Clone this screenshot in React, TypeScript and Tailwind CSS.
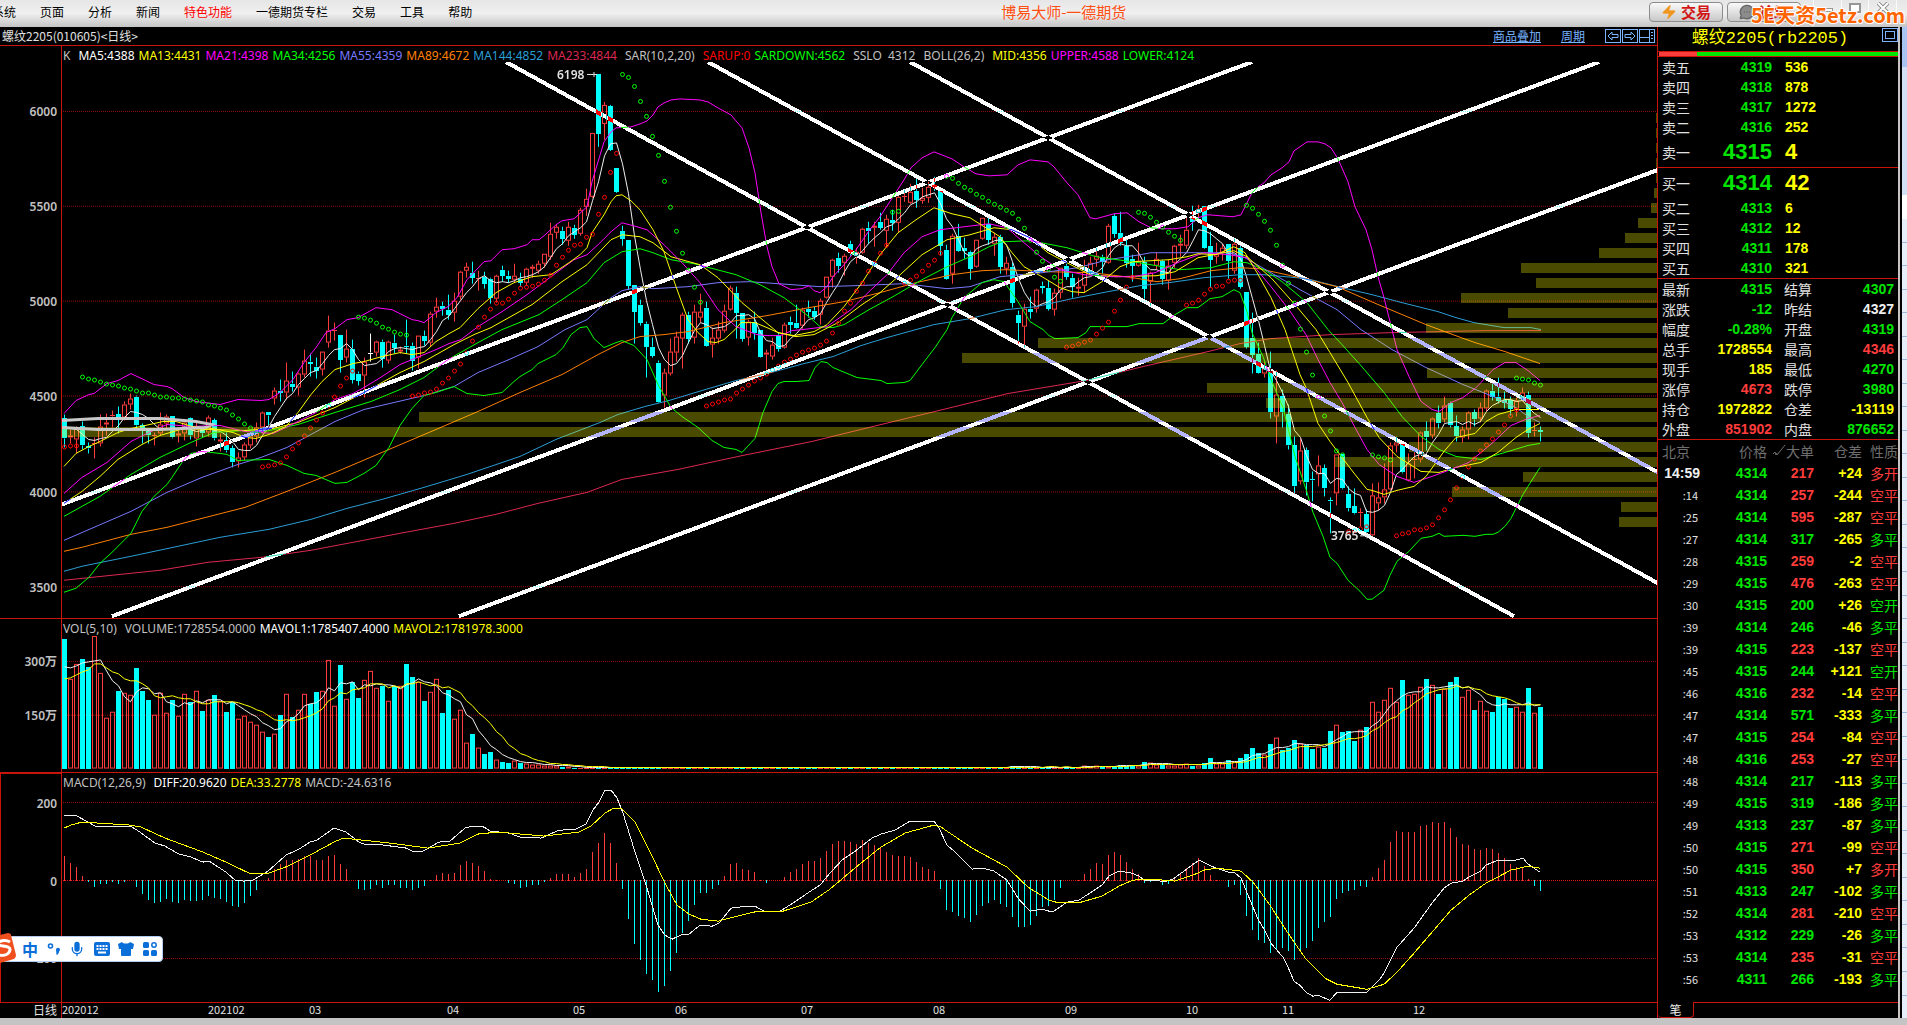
import React from "react";
import { Zap, MessageCircleMore, Mic } from "lucide-react";

const UP = "#ff3c3c";
const DOWN = "#00ffff";
const X0 = 64.5;
const STEP = 6;
const xAt = (i: number) => X0 + STEP * i;

type Candle = { kind: string; top: number; bottom: number; high: number; low: number };

/* kind (u = rise, d = fall, w = flat), body top, body bottom, high, low */
const CANDLE_TEXT = `d 419 439 415 447|u 436 438 430 443|u 429 440 427 453|d 427 446 422 449|d 447 449 443 453|u 444 445 438 458|u 427 444 415 446|u 423 425 414 435|u 416 417 411 427|d 415 418 407 433
u 405 418 402 420|u 399 405 394 409|d 397 426 396 429|d 426 429 424 443|d 432 436 430 443|u 436 437 433 445|u 425 434 413 435|u 417 424 415 430|d 417 438 417 438|u 434 436 431 442
u 423 434 420 440|d 419 436 418 439|u 429 439 422 446|d 430 434 427 437|u 418 433 416 436|d 421 439 419 440|u 440 442 434 451|d 441 451 433 452|d 449 463 446 467|u 458 462 453 467
u 445 458 443 460|u 437 446 435 448|u 428 437 423 442|u 413 428 412 433|d 413 416 413 425|u 391 399 388 404|d 391 393 380 401|u 381 393 363 399|d 384 387 372 391|u 374 388 373 395
u 361 375 350 377|d 362 364 354 376|d 367 371 358 378|u 352 370 352 375|u 331 343 316 347|u 330 331 323 340|d 335 360 335 372|u 349 358 330 362|d 349 380 340 383|d 374 381 372 385
u 362 376 358 397|w 353 354 334 361|u 342 353 341 356|d 342 359 340 367|u 342 361 341 363|d 343 348 335 353|u 350 352 347 353|d 346 347 320 353|d 346 361 343 370|u 336 358 336 368
d 336 341 331 345|u 314 343 312 346|u 307 312 298 317|d 306 309 302 315|d 310 315 295 319|u 301 313 293 321|u 272 297 271 299|u 267 271 263 277|d 273 278 262 283|u 278 279 271 290
d 277 284 272 288|d 279 298 278 303|u 276 299 275 302|d 270 276 266 281|d 276 279 271 282|u 276 280 264 282|d 279 283 273 286|u 269 283 268 285|u 267 269 265 277|u 264 271 261 273
u 254 264 254 267|u 234 257 223 259|u 227 233 225 238|d 231 239 227 244|u 227 241 222 245|d 228 235 225 238|u 210 234 208 235|u 199 207 189 215|u 133 197 133 197|d 74 134 74 146
u 105 124 102 139|d 106 150 105 150|d 168 192 168 192|d 231 239 226 245|d 240 286 240 289|d 285 312 285 343|d 305 323 300 325|d 324 347 322 377|d 347 356 338 357|d 363 402 361 402
u 373 396 369 407|u 352 374 339 375|u 337 353 332 361|u 315 339 313 368|d 315 339 312 343|u 312 338 305 343|u 312 318 294 322|d 308 346 302 346|u 338 345 328 357|u 330 339 322 343
u 311 331 305 332|u 288 310 286 310|d 293 313 287 338|d 313 339 313 341|u 322 338 320 345|d 322 333 312 339|d 330 357 330 357|u 353 355 350 369|u 345 357 338 359|d 335 349 333 351
u 325 348 323 348|d 322 325 317 333|d 323 328 305 328|u 310 326 308 328|d 309 312 301 317|d 311 317 307 319|u 301 315 299 324|u 277 298 277 298|u 260 277 259 287|d 258 266 253 272
u 256 263 254 275|d 244 252 241 255|u 252 256 248 263|u 229 253 228 253|d 228 231 222 243|u 226 228 222 246|d 222 228 213 229|u 219 231 215 247|d 220 223 210 230|u 197 223 196 232
u 196 197 190 201|u 192 203 184 203|d 191 200 179 207|u 198 201 188 203|u 187 198 182 202|d 185 187 177 190|d 191 246 191 255|d 250 279 245 279|u 236 274 234 283|d 236 251 224 251
d 248 251 238 258|d 252 269 251 279|u 240 267 240 267|u 218 239 218 239|d 224 240 218 244|u 237 244 233 255|d 237 267 235 273|u 263 269 257 274|d 267 303 263 307|d 315 323 311 343
u 309 327 304 347|d 309 312 297 318|u 290 309 289 312|d 286 288 282 293|d 288 309 281 310|u 293 310 289 315|u 268 293 268 298|d 266 277 264 279|d 278 287 274 297|u 287 289 278 295
u 272 286 260 292|u 263 272 257 274|u 256 260 248 266|d 257 262 255 273|u 226 263 224 263|d 216 234 214 237|d 233 243 212 245|d 246 263 240 267|d 259 266 255 281|u 261 266 243 266
d 262 289 257 298|u 273 282 272 305|u 259 266 253 269|d 261 279 260 284|u 266 281 260 289|u 246 263 245 267|u 244 246 235 256|u 230 246 218 248|d 218 222 206 230|u 209 213 205 218
d 206 248 206 248|d 246 260 232 287|u 254 257 243 263|u 248 253 244 260|d 244 261 244 278|u 244 271 239 273|d 248 287 246 288|d 292 347 292 348|d 338 355 313 373|d 354 373 343 373
u 369 374 362 377|d 371 413 352 418|u 395 417 371 443|d 396 413 390 427|d 415 446 405 449|d 446 487 437 493|u 451 482 439 484|d 451 483 448 495|d 480 481 472 501|u 466 475 456 486
d 469 489 465 496|d 501 502 498 533|u 455 494 455 505|d 455 489 455 489|d 495 509 487 511|d 507 514 489 514|u 513 514 509 526|d 515 533 510 533|u 496 536 484 536|u 498 504 483 510
u 490 498 464 503|u 446 490 443 490|u 443 446 437 452|d 445 473 445 473|u 464 481 454 481|u 460 461 451 478|u 433 460 432 462|d 432 438 422 450|u 419 436 418 438|d 414 424 406 428
u 406 420 397 422|d 403 426 402 427|d 427 437 416 441|u 430 438 427 442|u 413 430 412 439|d 413 420 410 426|u 408 419 403 422|u 391 409 390 411|d 391 397 384 400|d 397 401 378 403
d 400 403 392 408|d 400 409 397 415|u 401 410 398 416|u 393 398 388 401|d 395 434 392 437|u 431 432 423 436|d 431 433 427 441`;

const CANDLES: Candle[] = CANDLE_TEXT.split(/[|\n]/).map((row) => {
  const [kind, ...n] = row.trim().split(" ");
  const [top, bottom, high, low] = n.map(Number);
  return { kind, top, bottom, high, low };
});

const VOLUMES: number[] = [
  130, 90, 105, 110, 102, 133, 96, 51, 57, 78, 76, 74, 101, 78, 69, 54, 76, 56, 69, 53, 75, 67, 78, 58, 69, 74, 68, 57, 67, 50,
  53, 47, 44, 37, 32, 35, 54, 75, 52, 59, 75, 65, 77, 78, 109, 63, 104, 70, 87, 71, 89, 98, 81, 83, 68, 83, 83, 105, 92, 87,
  68, 77, 90, 56, 79, 50, 59, 26, 35, 21, 15, 17, 9, 7, 6, 8, 6, 5, 4, 4, 3, 3, 3, 2, 2,
  ...Array(71).fill(1),
  2, 1, 3, 3, 1, 1, 1, 1, 2, 1, 1, 2, 1, 1, 3, 2, 3, 2, 2, 3, 4, 3,
  4, 3, 7, 6, 4, 5, 3, 3, 4, 5, 3, 3, 6, 11, 5, 5, 9, 7, 11, 15, 21, 16, 14, 25, 31, 19, 21, 29, 25, 24, 20, 22, 21, 38,
  44, 37, 38, 28, 39, 42, 67, 57, 69, 81, 67, 89, 74, 75, 82, 90, 84, 75, 80, 87, 92, 72, 79, 59, 68, 58, 57, 72, 70, 61,
  62, 57, 81, 56, 62,
];

const HISTOGRAM: number[] = [
  25, 18, 14, 5, -1, -6, -3, -3, -1, -3, -1, 0, -6, -13, -19, -22, -21, -18, -21, -22, -19, -20, -20, -19, -15, -17, -18, -21,
  -25, -26, -22, -15, -9, 0, 3, 12, 17, 21, 21, 22, 25, 25, 21, 21, 25, 26, 17, 12, 0, -8, -9, -8, -4, -7, -4, -4, -7, -7, -9,
  -7, -5, 1, 6, 8, 7, 8, 16, 20, 18, 15, 10, 2, 1, 0, -2, -3, -7, -6, -4, -4, -1, 3, 7, 7, 7, 4, 8, 12, 29, 38, 48, 38, 18,
  -8, -38, -63, -79, -93, -99, -111, -105, -90, -72, -52, -40, -24, -12, -12, -8, -4, 5, 17, 18, 12, 11, 9, 1, -2, 0, 0, 4, 9,
  12, 17, 20, 20, 23, 30, 37, 40, 40, 39, 37, 41, 38, 36, 33, 29, 26, 25, 25, 24, 19, 14, 12, 10, -8, -29, -31, -35, -37, -41,
  -34, -25, -22, -19, -23, -26, -36, -46, -46, -44, -35, -26, -25, -19, -7, 0, 0, 1, 7, 12, 18, 17, 26, 29, 26, 19, 12, 7, -2,
  -1, 0, -4, -3, 2, 7, 13, 18, 23, 15, 6, 1, 0, -6, -4, -14, -35, -49, -59, -62, -72, -69, -67, -70, -79, -69, -67, -60, -47,
  -41, -36, -18, -12, -10, -9, -5, -6, 4, 13, 21, 39, 50, 49, 49, 49, 55, 56, 59, 58, 59, 53, 44, 37, 36, 32, 31, 33, 32, 28,
  23, 17, 14, 14, 2, -5, -10,
];

const average = (values: number[], seed: number[], span: number) => {
  const all = [...seed, ...values];
  return values.map((_, i) => {
    const end = i + seed.length + 1;
    return all.slice(end - span, end).reduce((a, b) => a + b, 0) / span;
  });
};

const toPoints = (ys: number[]) => ys.map((y, i) => `${xAt(i)},${Math.round(y)}`).join(" ");

const MA5 = toPoints(average(CANDLES.map((c) => (c.kind === "d" ? c.bottom : c.top)), [424, 424, 424, 424], 5));
const VOL_SEED = [78, 78, 78, 78, 78, 95, 95, 95, 95];
const MAVOL1 = toPoints(average(VOLUMES, VOL_SEED, 5).map((v) => 769 - v));
const MAVOL2 = toPoints(average(VOLUMES, VOL_SEED, 10).map((v) => 769 - v));

const PRICE_LINES: { color: string; points: string }[] = [
  { color: "#dc2850", points: "64,581 112,576 160,571 208,563 262,558 311,551 353,543 400,534 454,524 496,515 538,504 587,493 622,480 678,470 743,456 812,442 873,427 935,412 1008,394 1086,381 1143,367 1208,352 1240,344 1271,339 1331,335 1392,333 1486,331 1541,331" },
  { color: "#2a9fd6", points: "64,572 82,567 131,557 178,547 220,538 269,530 311,520 347,509 382,500 424,488 467,475 520,457 556,440 600,423 618,415 645,407 669,401 702,391 736,381 771,373 804,364 833,357 861,346 887,338 934,325 970,319 1006,310 1036,307 1072,299 1108,292 1140,286 1169,283 1204,278 1240,275 1264,275 1307,279 1342,288 1372,295 1402,303 1438,312 1456,318 1474,323 1504,328 1531,328 1541,330" },
  { color: "#ff8000", points: "64,552 82,548 131,535 167,528 202,519 245,508 287,492 335,473 389,450 436,430 478,412 520,393 562,375 598,355 622,343 640,337 664,335 688,332 724,323 767,316 809,308 844,302 880,293 916,283 952,275 982,271 1006,270 1047,272 1092,273 1133,278 1157,282 1180,279 1211,271 1240,268 1259,269 1300,278 1337,287 1376,304 1426,325 1461,338 1475,343 1505,352 1540,364" },
  { color: "#7878ff", points: "64,541 94,528 131,512 167,493 202,478 238,465 261,458 287,448 311,435 335,422 364,410 394,403 424,396 454,387 478,373 509,360 538,347 565,330 587,320 611,298 622,291 640,287 653,289 688,287 718,283 749,282 778,284 820,287 856,286 904,284 947,289 970,287 1000,277 1042,273 1078,268 1108,260 1140,255 1151,253 1229,253 1245,258 1271,273 1300,290 1337,310 1361,330 1392,350 1426,368 1463,385 1493,397 1516,408 1528,417 1540,423" },
  { color: "#00ff00", points: "64,517 100,497 131,475 160,458 191,443 214,433 245,431 265,432 298,425 335,413 371,402 400,390 424,378 448,360 478,343 502,330 539,315 562,300 587,283 604,263 622,252 640,249 653,253 671,260 694,264 736,275 760,285 784,298 809,317 820,327 833,328 844,325 869,310 893,297 922,280 947,267 970,257 989,247 1002,242 1031,241 1067,248 1096,257 1139,263 1180,270 1211,268 1234,262 1247,263 1264,270 1282,282 1307,303 1328,330 1342,345 1360,365 1384,393 1402,417 1421,437 1439,450 1456,457 1481,460 1505,453 1528,446 1540,444" },
  { color: "#ffff00", points: "64,504 82,492 100,477 118,460 142,445 160,436 184,429 208,430 245,431 273,429 298,423 335,408 364,393 400,373 424,362 454,345 474,335 491,328 532,305 562,282 587,265 611,240 622,235 640,237 653,243 671,257 700,265 718,278 742,303 760,318 778,333 796,337 814,335 838,323 862,305 880,293 898,277 922,255 947,240 970,235 994,228 1012,230 1030,238 1048,253 1067,263 1090,275 1116,277 1157,276 1175,272 1198,258 1234,251 1247,257 1271,278 1295,305 1316,330 1330,353 1348,383 1367,418 1379,438 1397,457 1421,472 1439,473 1456,468 1481,463 1498,453 1516,438 1528,430 1540,424" },
  { color: "#ff00ff", points: "64,494 82,478 107,463 131,442 149,433 167,425 191,427 220,426 245,432 273,434 286,428 298,422 316,413 335,400 353,394 364,388 382,377 400,365 424,355 436,350 449,344 461,340 478,327 502,312 527,295 551,277 574,260 587,255 598,245 611,232 622,223 637,227 647,230 664,245 682,263 700,283 718,310 736,327 749,332 757,335 767,336 780,336 792,331 802,330 827,327 851,310 869,292 887,275 904,253 922,237 940,230 964,227 989,224 1007,228 1024,243 1042,258 1060,270 1084,275 1112,277 1133,277 1155,273 1180,262 1204,253 1229,255 1247,258 1271,287 1289,310 1306,335 1318,360 1330,383 1342,403 1355,428 1367,450 1379,465 1397,477 1414,483 1432,477 1451,470 1469,463 1493,443 1511,426 1528,419 1540,416" },
  { color: "#ffff00", points: "64,467 76,454 89,447 98,443 118,433 131,429 141,427 163,422 176,422 192,427 212,429 233,433 245,438 256,439 269,435 286,427 298,413 311,395 322,382 335,370 353,364 364,362 382,357 400,353 412,355 424,353 436,342 449,334 460,328 478,309 496,293 514,283 532,277 551,275 569,263 580,255 587,248 592,233 604,215 611,202 616,196 622,195 631,201 640,210 653,230 664,252 676,287 688,320 698,333 708,342 716,343 724,340 735,330 741,323 755,323 767,328 778,333 794,336 814,332 827,325 844,307 862,283 880,255 898,233 916,220 934,208 952,214 970,218 989,230 1000,237 1012,253 1024,267 1042,277 1060,288 1072,292 1084,293 1102,282 1120,267 1133,262 1151,261 1169,260 1187,257 1198,254 1216,255 1234,247 1245,253 1257,273 1271,298 1285,330 1300,375 1306,388 1318,424 1330,442 1342,458 1355,475 1367,490 1372,491 1384,495 1397,491 1414,487 1426,477 1444,452 1456,438 1475,434 1486,422 1498,415 1516,410 1540,410" },
  { color: "#00ff00", points: "64,593 76,589 89,578 100,564 112,553 131,534 142,512 154,497 167,485 172,478 184,460 191,454 202,452 220,454 227,455 238,461 269,460 287,466 304,474 316,476 335,484 347,483 364,474 376,466 389,448 400,426 412,409 424,396 436,393 454,387 467,394 484,396 502,393 514,382 520,377 532,370 538,364 556,355 563,348 571,335 580,328 587,327 594,339 604,348 616,343 622,341 634,346 647,360 658,385 671,408 682,417 698,428 712,441 724,448 736,450 742,453 755,439 763,413 772,392 778,384 784,382 796,382 809,381 815,368 821,362 827,363 833,368 857,378 881,381 887,384 904,383 910,381 922,365 935,348 947,330 952,318 964,298 982,283 994,280 1004,282 1018,302 1030,322 1043,330 1049,336 1055,339 1078,338 1086,333 1090,327 1127,327 1139,324 1163,324 1175,315 1187,308 1198,308 1210,299 1222,297 1234,290 1240,293 1247,312 1252,333 1263,357 1271,380 1283,408 1295,457 1306,490 1313,513 1323,537 1330,558 1337,564 1348,581 1360,592 1367,600 1372,600 1384,591 1390,576 1397,562 1409,552 1421,539 1432,537 1439,534 1444,537 1463,536 1475,537 1486,535 1493,535 1498,533 1505,527 1511,519 1516,509 1523,495 1528,487 1540,468" },
  { color: "#ff00ff", points: "64,414 76,401 89,395 94,394 107,384 118,381 131,374 154,385 167,387 172,389 184,398 196,402 220,405 238,400 261,401 269,400 280,393 293,380 304,363 316,348 326,333 335,329 347,320 358,318 376,308 392,310 412,320 418,321 424,323 436,313 448,307 457,298 467,280 484,262 491,261 502,250 514,249 527,245 532,240 539,240 544,236 556,225 562,221 574,219 587,207 592,182 604,142 611,132 616,128 631,127 640,124 647,121 653,115 658,107 664,103 671,100 680,99 700,100 708,102 718,108 731,115 736,121 742,128 749,148 755,173 761,213 767,247 772,267 779,284 791,290 802,289 809,286 814,291 820,293 827,287 833,277 844,265 856,250 869,231 880,217 893,197 904,180 911,168 922,158 934,152 952,159 964,167 976,174 989,176 1007,175 1018,165 1030,160 1048,162 1054,167 1067,183 1078,195 1090,218 1096,219 1114,214 1127,213 1139,222 1151,228 1162,229 1175,229 1188,227 1198,218 1208,215 1233,217 1241,215 1252,193 1258,187 1264,183 1271,175 1282,168 1289,162 1294,151 1307,142 1318,142 1325,144 1331,148 1338,159 1348,182 1355,207 1366,230 1372,250 1378,277 1384,298 1392,330 1397,350 1409,377 1421,402 1432,410 1439,412 1451,403 1463,398 1475,389 1481,383 1493,370 1505,363 1516,363 1528,371 1540,381" },
];

const DIFF =
  "64,815 77,816 88,822 95,826 130,826 137,830 155,843 165,846 179,854 191,857 203,862 209,861 226,872 235,880 244,881 253,880 268,871 286,855 299,849 310,842 317,840 334,828 346,832 359,842 364,844 376,844 406,848 412,851 423,851 439,842 450,841 465,828 472,826 484,827 490,831 509,833 520,837 541,838 557,831 569,829 576,829 586,824 593,810 599,802 605,790 611,790 617,798 623,813 635,852 647,888 658,925 665,935 672,939 683,934 689,934 700,925 712,926 719,923 731,908 737,907 755,906 764,911 780,911 793,903 809,892 820,885 830,873 842,860 854,852 872,838 881,834 895,830 910,821 934,821 939,828 947,845 954,851 972,869 983,868 994,871 1007,880 1018,898 1030,911 1042,909 1049,911 1054,911 1067,902 1079,900 1102,885 1109,876 1119,871 1132,873 1139,876 1144,880 1157,880 1163,882 1173,879 1199,860 1205,863 1216,868 1228,872 1234,872 1241,878 1253,907 1258,919 1264,929 1271,943 1283,957 1288,967 1294,981 1300,985 1306,992 1313,996 1318,995 1330,1000 1337,992 1355,992 1367,992 1379,980 1384,973 1397,947 1414,928 1432,903 1444,888 1451,883 1463,881 1469,877 1481,871 1486,865 1498,860 1516,860 1523,858 1528,864 1540,872";
const DEA =
  "64,828 71,825 82,822 130,825 141,827 165,838 203,852 226,862 249,873 269,873 288,866 310,855 334,842 343,838 390,843 428,848 460,843 478,834 498,832 544,836 579,832 591,826 605,813 614,808 621,808 635,822 653,858 665,883 677,905 689,914 701,919 718,921 737,916 758,911 783,911 811,902 830,889 856,867 881,847 905,833 934,825 941,827 972,848 1007,867 1028,887 1049,900 1056,902 1081,902 1102,896 1119,886 1133,880 1151,879 1175,881 1193,875 1204,870 1216,868 1241,871 1253,882 1270,905 1288,933 1306,959 1325,978 1337,984 1367,989 1384,984 1397,972 1414,953 1432,932 1451,910 1469,895 1486,883 1511,870 1528,866 1540,868";

/* first candle index, then one mark per candle */
const SAR_DOWN: [number, number[]][] = [
  [3, [377, 379, 380, 382, 384, 385, 386, 388, 389, 391, 393, 393, 395, 397, 397, 398, 398, 399, 400, 401, 402, 405, 406, 408, 410, 415, 419, 424, 428]],
  [49, [317, 318, 320, 323, 327, 329, 332, 334, 335]],
  [93, [74, 77, 86, 101, 116, 136, 155, 181, 207, 231, 253, 270, 287, 302]],
  [138, [212, 211]],
  [147, [176, 178, 183, 187, 190, 194, 197, 201, 204, 207, 210, 213, 219, 228, 240, 252, 261, 269, 277, 281]],
  [179, [212, 213, 217, 222, 227, 232, 236, 240]],
  [197, [205, 208, 214, 221, 230, 245, 265, 283, 303, 329, 352, 375, 397, 416, 431, 451, 455]],
  [218, [455, 457, 458, 460]],
  [242, [378, 379, 380, 383, 385]],
];
const SAR_UP: [number, number[]][] = [
  [0, [447, 446, 446]],
  [33, [467, 466, 465, 463, 457, 449, 443, 436, 428, 420, 413, 406, 397, 386, 378, 371]],
  [58, [396, 395, 393, 392, 389, 383, 378, 371, 364, 353, 341]],
  [69, [327, 317, 309, 303, 303, 299, 293, 288, 287, 286, 284, 280, 275, 265, 257, 250, 245, 244, 237, 234, 214, 197, 172, 153]],
  [107, [406, 404, 402, 400, 399, 393, 389, 385, 381, 378, 374, 370, 366, 362, 359, 355, 352, 350, 348, 345, 341, 333, 323, 311, 303, 291, 283, 271, 263, 253, 245]],
  [140, [283, 280, 276, 271, 265, 260, 253]],
  [167, [347, 346, 344, 342, 340, 334, 328, 322, 311, 300, 287, 277]],
  [187, [305, 303, 300, 294, 289, 286, 286, 281, 280, 280]],
  [214, [532, 531, 529, 527]],
  [222, [536, 534, 533, 530, 530, 528, 525, 518, 510, 500, 488, 477, 467, 459, 451, 445, 439, 432, 425, 416, 410]],
];

/* left edge of each price band, starting at y = 113 with a pitch of 15 */
const PROFILE = [
  1656, 1656, 1656, 1656, 1656, 1654, 1651, 1638, 1625, 1599, 1521, 1536, 1461, 1508, 1426, 1038, 962, 1427, 1207, 1266, 419, 62,
  1409, 1335, 1523, 1452, 1621, 1619,
];

const TRENDS = [
  "506,62 1514,617",
  "708,62 1658,584",
  "910,62 1658,473",
  "62,505 1252,62",
  "112,617 1599,62",
  "459,617 1658,170",
];

type Tag = { text: string; color: string; wide?: boolean };
const GREY = "text-[#c0c0c0]";
const K_TAGS: Tag[] = [
  { text: "K", color: GREY, wide: true },
  { text: "MA5:4388", color: "text-white" },
  { text: "MA13:4431", color: "text-[#ffff00]" },
  { text: "MA21:4398", color: "text-[#ff00ff]" },
  { text: "MA34:4256", color: "text-[#00ff00]" },
  { text: "MA55:4359", color: "text-[#7878ff]" },
  { text: "MA89:4672", color: "text-[#ff8000]" },
  { text: "MA144:4852", color: "text-[#2a9fd6]" },
  { text: "MA233:4844", color: "text-[#dc2850]", wide: true },
  { text: "SAR(10,2,20)", color: GREY, wide: true },
  { text: "SARUP:0", color: "text-[#ff0000]" },
  { text: "SARDOWN:4562", color: "text-[#00ff00]", wide: true },
  { text: "SSLO  4312", color: GREY, wide: true },
  { text: "BOLL(26,2)", color: GREY, wide: true },
  { text: "MID:4356", color: "text-[#ffff00]" },
  { text: "UPPER:4588", color: "text-[#ff00ff]" },
  { text: "LOWER:4124", color: "text-[#00ff00]" },
];
const VOL_TAGS: Tag[] = [
  { text: "VOL(5,10)", color: GREY, wide: true },
  { text: "VOLUME:1728554.0000", color: GREY },
  { text: "MAVOL1:1785407.4000", color: "text-white" },
  { text: "MAVOL2:1781978.3000", color: "text-[#ffff00]" },
];
const MACD_TAGS: Tag[] = [
  { text: "MACD(12,26,9)", color: GREY, wide: true },
  { text: "DIFF:20.9620", color: "text-white" },
  { text: "DEA:33.2778", color: "text-[#ffff00]" },
  { text: "MACD:-24.6316", color: GREY },
];

function Legend({ tags }: { tags: Tag[] }) {
  return (
    <div className="flex h-4 shrink-0 items-center gap-1 whitespace-pre pl-px pt-1 font-['Noto_Sans',sans-serif] text-[12px] leading-4">
      {tags.map((t) => (
        <span key={t.text} className={`${t.color} ${t.wide ? "mr-1" : ""}`}>
          {t.text}
        </span>
      ))}
    </div>
  );
}

function Axis({ box, labels, framed }: { box: string; labels: [string, number][]; framed?: boolean }) {
  return (
    <div className={`flex w-[62px] shrink-0 border-r border-[#c8140a] ${framed ? "border-l border-t" : ""}`}>
      <svg viewBox={box} preserveAspectRatio="none" className="h-full w-full">
        {labels.map(([text, y]) => (
          <text key={text} x={57} y={y + 5} textAnchor="end" fill="#c0c0c0" className="font-['Noto_Sans','Noto_Sans_CJK_SC',sans-serif] text-[12px] font-semibold">
            {text}
          </text>
        ))}
      </svg>
    </div>
  );
}

function GridLines({ ys, bright }: { ys: number[]; bright?: number }) {
  return (
    <g shapeRendering="crispEdges">
      {ys.map((y) => (
        <line key={y} x1={63} x2={1657} y1={y + 0.5} y2={y + 0.5} stroke={y === bright ? "#e01410" : "#960a08"} strokeDasharray="1 1" />
      ))}
    </g>
  );
}

function SarMarks({ runs, color }: { runs: [number, number[]][]; color: string }) {
  return (
    <g stroke={color} fill="none">
      {runs.map(([start, ys]) =>
        ys.map((y, n) => <ellipse key={`${start}-${n}`} cx={xAt(start + n)} cy={y + 0.5} rx={2} ry={2} />)
      )}
    </g>
  );
}

function PricePlot() {
  return (
    <svg viewBox="62 62 1595 557" preserveAspectRatio="none" className="isolate min-h-0 w-full flex-1">
      <rect x={62} y={64} width={1595} height={555} fill="#000" />
      <GridLines ys={[111, 206, 301, 396, 492, 587]} />
      <g shapeRendering="crispEdges">
        {CANDLES.map((c, i) => {
          const x = xAt(i);
          const color = c.kind === "u" ? UP : c.kind === "d" ? DOWN : "#fff";
          const h = Math.max(c.bottom - c.top, 1);
          return (
            <g key={i} stroke={color}>
              <line x1={x} x2={x} y1={c.high} y2={c.top} />
              <line x1={x} x2={x} y1={c.top + h} y2={Math.max(c.low + 1, c.top + h)} />
              {c.kind === "u" && h > 1 ? (
                <rect x={x - 2} y={c.top + 0.5} width={4} height={h - 1} fill="none" />
              ) : (
                <rect x={x - 2.5} y={c.top} width={5} height={h} fill={color} stroke="none" />
              )}
            </g>
          );
        })}
      </g>
      <g fill="none" strokeWidth={1} shapeRendering="crispEdges">
        <polyline points={MA5} stroke="#f0f0f0" />
        {PRICE_LINES.map((l, i) => (
          <polyline key={i} points={l.points} stroke={l.color} />
        ))}
      </g>
      <SarMarks runs={SAR_DOWN} color="#00ff00" />
      <SarMarks runs={SAR_UP} color="#ff0000" />
      <g fill="#ffff00" fillOpacity={0.29} shapeRendering="crispEdges">
        {PROFILE.map((x, i) => (
          <rect key={i} x={x} y={113 + 15 * i} width={1657 - x} height={10} />
        ))}
      </g>
      <path d="M62 421L98 419H160L196 422L212 425L205 428L160 430H98L62 428" fill="none" stroke="#c8c8c8" strokeWidth={3} />
      {TRENDS.map((t) => (
        <polyline key={t} points={t} fill="none" stroke="#fff" strokeWidth={4} shapeRendering="crispEdges" className="mix-blend-difference" />
      ))}
      <g fill="#e0e0e0" stroke="none" className="font-['Noto_Sans',sans-serif] text-[12px] font-semibold">
        <text x={557} y={79}>6198</text>
        <text x={1331} y={541}>3765</text>
      </g>
      <path d="M587 74.5H597M594 72v5M1360 536.5h10M1367 534v5" stroke="#e0e0e0" shapeRendering="crispEdges" />
    </svg>
  );
}

function VolumePlot() {
  return (
    <svg viewBox="62 635 1595 137" preserveAspectRatio="none" className="min-h-0 w-full flex-1">
      <GridLines ys={[661, 715]} />
      <g shapeRendering="crispEdges">
        {VOLUMES.map((v, i) => {
          const rise = CANDLES[i] && CANDLES[i].kind !== "d";
          return rise && v > 1 ? (
            <rect key={i} x={xAt(i) - 2} y={769.5 - v} width={4} height={v - 1} fill="none" stroke={UP} />
          ) : (
            <rect key={i} x={xAt(i) - 2.5} y={769 - v} width={5} height={v} fill={rise ? UP : DOWN} />
          );
        })}
        <polyline points={MAVOL1} fill="none" stroke="#f0f0f0" />
        <polyline points={MAVOL2} fill="none" stroke="#ffff00" />
      </g>
    </svg>
  );
}

function MacdPlot() {
  return (
    <svg viewBox="62 789 1595 213" preserveAspectRatio="none" className="min-h-0 w-full flex-1">
      <GridLines ys={[802, 880, 958]} bright={880} />
      <g shapeRendering="crispEdges" fill="none">
        {HISTOGRAM.map((v, i) => (
          <line key={i} x1={xAt(i)} x2={xAt(i)} y1={v < 0 ? 880 : 881} y2={881 - v} stroke={v < 0 ? DOWN : UP} />
        ))}
        <polyline points={DIFF} stroke="#f0f0f0" />
        <polyline points={DEA} stroke="#ffff00" />
      </g>
    </svg>
  );
}

const MONTHS: [string, number][] = [
  ["202012", 146], ["202102", 101], ["03", 138], ["04", 126], ["05", 102], ["06", 126], ["07", 132], ["08", 132],
  ["09", 121], ["10", 96], ["11", 131], ["12", 244],
];

const G = "text-[#00e600]";
const R = "text-[#ff3c3c]";
const Y = "text-[#ffff00]";

function BookRows({ rows, bigRow }: { rows: [string, string, string][]; bigRow: number }) {
  return (
    <table className="w-full table-fixed border-b border-[#c8140a]">
      <colgroup>
        <col className="w-[42px]" />
        <col className="w-[72px]" />
        <col />
      </colgroup>
      <tbody>
        {rows.map(([name, price, qty], i) => {
          const big = i === bigRow;
          return (
            <tr key={name} className={big ? "h-[30px]" : "h-5"}>
              <th scope="row" className="pl-1 text-left font-normal text-[#e0e0e0]">{name}</th>
              <td className={`text-right font-['Liberation_Sans',sans-serif] font-bold ${G} ${big ? "text-[22px] leading-6" : ""}`}>{price}</td>
              <td className={`pl-[13px] font-['Liberation_Sans',sans-serif] font-bold ${Y} ${big ? "text-[22px] leading-6" : ""}`}>{qty}</td>
            </tr>
          );
        })}
      </tbody>
    </table>
  );
}

const STATS: [string, string, string, string, string, string][] = [
  ["最新", "4315", G, "结算", "4307", G],
  ["涨跌", "-12", G, "昨结", "4327", "text-[#f0f0f0]"],
  ["幅度", "-0.28%", G, "开盘", "4319", G],
  ["总手", "1728554", Y, "最高", "4346", R],
  ["现手", "185", Y, "最低", "4270", G],
  ["涨停", "4673", R, "跌停", "3980", G],
  ["持仓", "1972822", Y, "仓差", "-13119", Y],
  ["外盘", "851902", R, "内盘", "876652", G],
];

/* time, price, lots, open-interest change, nature, side */
const TICKS: [string, string, string, string, string, string][] = [
  ["14:59", "4314", "217", "+24", "多开", R],
  [":14", "4314", "257", "-244", "空平", R],
  [":25", "4314", "595", "-287", "空平", R],
  [":27", "4314", "317", "-265", "多平", G],
  [":28", "4315", "259", "-2", "空平", R],
  [":29", "4315", "476", "-263", "空平", R],
  [":30", "4315", "200", "+26", "空开", G],
  [":39", "4314", "246", "-46", "多平", G],
  [":39", "4315", "223", "-137", "空平", R],
  [":45", "4315", "244", "+121", "空开", G],
  [":46", "4316", "232", "-14", "空平", R],
  [":47", "4314", "571", "-333", "多平", G],
  [":47", "4315", "254", "-84", "空平", R],
  [":48", "4316", "253", "-27", "空平", R],
  [":48", "4314", "217", "-113", "多平", G],
  [":49", "4315", "319", "-186", "多平", G],
  [":49", "4313", "237", "-87", "多平", G],
  [":50", "4315", "271", "-99", "空平", R],
  [":50", "4315", "350", "+7", "多开", R],
  [":51", "4313", "247", "-102", "多平", G],
  [":52", "4314", "281", "-210", "空平", R],
  [":53", "4312", "229", "-26", "多平", G],
  [":53", "4314", "235", "-31", "空平", R],
  [":56", "4311", "266", "-193", "多平", G],
];

function QuotePanel() {
  return (
    <aside className="flex w-[241px] shrink-0 flex-col border-l border-[#c8140a] font-['Noto_Sans_CJK_SC',sans-serif] text-[14px] leading-5">
      <div className="relative flex h-6 shrink-0 items-center justify-center">
        <h1 className="pr-4 font-['Liberation_Mono','Noto_Sans_CJK_SC',monospace] text-[17px] leading-6 text-[#ffff00]">螺纹2205(rb2205)</h1>
        <button type="button" aria-label="还原窗口" className="absolute right-0 top-px h-3.5 w-4 border border-[#78b4ff] p-0.5">
          <span className="block h-full w-full border border-[#78b4ff]" />
        </button>
      </div>
      <div className="flex h-1.5 shrink-0 border-y border-[#c8140a] pl-px">
        <div className="flex-[38] bg-[#ff3c3c]" />
        <div className="flex-[200] bg-[#00e600]" />
      </div>
      <BookRows bigRow={4} rows={[["卖五", "4319", "536"], ["卖四", "4318", "878"], ["卖三", "4317", "1272"], ["卖二", "4316", "252"], ["卖一", "4315", "4"]]} />
      <BookRows bigRow={0} rows={[["买一", "4314", "42"], ["买二", "4313", "6"], ["买三", "4312", "12"], ["买四", "4311", "178"], ["买五", "4310", "321"]]} />
      <table className="w-full table-fixed border-b border-[#c8140a]">
        <colgroup>
          <col className="w-[42px]" />
          <col className="w-[72px]" />
          <col className="w-[46px]" />
          <col />
        </colgroup>
        <tbody>
          {STATS.map(([a, av, ac, b, bv, bc]) => (
            <tr key={a} className="h-5">
              <th scope="row" className="pl-1 text-left font-normal text-[#e0e0e0]">{a}</th>
              <td className={`whitespace-nowrap text-right font-['Liberation_Sans',sans-serif] font-bold ${ac}`}>{av}</td>
              <th scope="row" className="pl-3 text-left font-normal text-[#e0e0e0]">{b}</th>
              <td className={`pr-1 text-right font-['Liberation_Sans',sans-serif] font-bold ${bc}`}>{bv}</td>
            </tr>
          ))}
        </tbody>
      </table>
      <table className="w-full table-fixed text-right">
        <colgroup>
          <col className="w-[42px]" />
          <col className="w-[67px]" />
          <col className="w-[47px]" />
          <col className="w-[48px]" />
          <col />
        </colgroup>
        <thead>
          <tr className="h-[22px] text-[#6e6e6e]">
            <th scope="col" className="pl-1 text-left font-normal">北京</th>
            <th scope="col" className="font-normal">价格</th>
            <th scope="col" className="font-normal">
              <span className="flex items-center justify-end">
                <svg viewBox="0 0 14 14" className="h-3.5 w-3.5" fill="none" stroke="#6e6e6e">
                  <path d="M1 10l2-2 1 3 1-2M5 11l8-10" />
                </svg>
                大单
              </span>
            </th>
            <th scope="col" className="font-normal">仓差</th>
            <th scope="col" className="font-normal">性质</th>
          </tr>
        </thead>
        <tbody className="font-['Liberation_Sans',sans-serif] font-bold">
          {TICKS.map(([time, price, lots, delta, nature, side], i) => (
            <tr key={i} className="h-[22px]">
              <td className={i === 0 ? "text-[#f0f0f0]" : "pr-0.5 font-['Noto_Sans_CJK_SC',sans-serif] text-[11px] font-normal text-[#e0e0e0]"}>{time}</td>
              <td className={G}>{price}</td>
              <td className={side}>{lots}</td>
              <td className={Y}>{delta}</td>
              <td className={`font-['Noto_Sans_CJK_SC',sans-serif] font-normal ${side}`}>{nature}</td>
            </tr>
          ))}
        </tbody>
      </table>
      <div className="mt-auto flex h-4 shrink-0">
        <button type="button" className="w-9 rounded-b-sm border-b border-r border-[#c8140a] text-[12px] leading-3.5 text-[#f0f0f0]">笔</button>
        <div className="flex-1 border-t border-[#c8140a]" />
      </div>
    </aside>
  );
}

function MenuBar() {
  const items = ["系统", "页面", "分析", "新闻", "特色功能", "一德期货专栏", "交易", "工具", "帮助"];
  return (
    <header className="relative flex h-[27px] shrink-0 items-center overflow-hidden bg-gradient-to-b from-[#e6e6e6] via-[#f0f0f0] to-[#c4c4c4] pb-1 font-['Noto_Sans_CJK_SC',sans-serif]">
      <nav className="-ml-2 flex gap-6 text-[12px] leading-5 text-black">
        {items.map((m) => (
          <button key={m} type="button" className={`shrink-0 whitespace-nowrap ${m === "特色功能" ? "text-[#ff0000]" : ""}`}>
            {m}
          </button>
        ))}
      </nav>
      <p className="flex-1 whitespace-nowrap pl-[529px] text-[15px] leading-5 text-[#ff5014]">博易大师-一德期货</p>
      <div className="flex items-center gap-1 pr-[106px] text-[15px] font-bold leading-4 text-[#d21414]">
        <button type="button" className="flex h-5 w-[74px] items-center justify-center gap-1 rounded-sm border border-[#8c8c8c] bg-gradient-to-b from-[#fafafa] to-[#c8c8c8]">
          <Zap className="h-4 w-4 fill-[#f0961e] text-[#f0961e]" strokeWidth={1} />
          交易
        </button>
        <button type="button" className="flex h-5 w-[74px] items-center justify-center gap-1 rounded-sm border border-[#8c8c8c] bg-gradient-to-b from-[#fafafa] to-[#c8c8c8]">
          <MessageCircleMore className="h-4 w-4 fill-[#8c8c8c] text-[#646464]" />
          论坛
        </button>
      </div>
      <div className="absolute right-2.5 top-0 flex h-4 w-[84px] divide-x divide-white/80 border-x border-white/80">
        <button type="button" aria-label="最小化" className="flex flex-1 items-end justify-center pb-1">
          <span className="h-1 w-3 border border-[#969696] bg-white" />
        </button>
        <button type="button" aria-label="还原" className="flex flex-1 items-center justify-center">
          <span className="h-2.5 w-3 border-2 border-[#969696] bg-white" />
        </button>
        <button type="button" aria-label="关闭" className="flex flex-1 items-center justify-center">
          <svg viewBox="0 0 12 12" className="h-3 w-3">
            <path d="M1 1l10 10M11 1L1 11" stroke="#8c8c8c" strokeWidth={4} />
            <path d="M1 1l10 10M11 1L1 11" stroke="#fff" strokeWidth={2} />
          </svg>
        </button>
      </div>
      <span className="absolute right-0.5 top-[3px] whitespace-nowrap text-[20px] font-bold leading-6 text-[#ff6400] [paint-order:stroke_fill] [-webkit-text-stroke:2px_white]">
        5E天资5etz.com
      </span>
    </header>
  );
}

function InputToolbar() {
  return (
    <div className="absolute bottom-[63px] left-0 flex h-[26px] w-[163px] items-center justify-between rounded-r-sm border border-[#b4cdee] bg-white pl-[21px] pr-[5px] text-[#0a6fd8]">
      <svg viewBox="0 0 18 30" className="absolute -left-px -top-1 h-[30px] w-[18px]">
        <path d="M0 2L8 0c2 0 3 1 3 2l5 20c0 2-1 3-2 4L0 30z" fill="#f0501e" />
        <path d="M10 9C5 6-2 8-2 11s13 1 12 6-7 6-13 5" fill="none" stroke="#fff" strokeWidth={3} />
      </svg>
      <button type="button" className="font-['Noto_Sans_CJK_SC',sans-serif] text-[16px] font-bold leading-5">中</button>
      <button type="button" aria-label="标点">
        <svg viewBox="0 0 14 14" className="h-3.5 w-3.5">
          <circle cx={3.5} cy={4} r={2} fill="none" stroke="currentColor" strokeWidth={1.6} />
          <path d="M9 7.5a2 2 0 1 1 3 2c0 2-1 3-2.500 3.500" fill="currentColor" />
        </svg>
      </button>
      <button type="button" aria-label="语音">
        <Mic className="h-4 w-4 [&>rect]:fill-current" />
      </button>
      <button type="button" aria-label="键盘">
        <svg viewBox="0 0 16 14" className="h-3.5 w-4">
          <rect width={16} height={14} rx={2} fill="currentColor" />
          <path d="M2.500 4h11M2.500 7h11" stroke="#fff" strokeWidth={2} strokeDasharray="2 1" />
          <path d="M4 10.500h8" stroke="#fff" strokeWidth={2} />
        </svg>
      </button>
      <button type="button" aria-label="皮肤">
        <svg viewBox="0 0 16 14" className="h-3.5 w-4">
          <path d="M4 0c1 2 7 2 8 0l4 2-1 5h-2v6q0 1-1 1H4q-1 0-1-1V7H1L0 2z" fill="currentColor" />
        </svg>
      </button>
      <button type="button" aria-label="工具箱">
        <svg viewBox="0 0 14 14" className="h-3.5 w-3.5" fill="currentColor">
          <rect width={6} height={6} rx={1.5} />
          <rect y={8} width={6} height={6} rx={1.5} />
          <rect x={8} y={8} width={6} height={6} rx={1.5} />
          <circle cx={11} cy={3} r={2.200} fill="none" stroke="currentColor" strokeWidth={1.5} />
        </svg>
      </button>
    </div>
  );
}

export default function App() {
  return (
    <div className="relative flex h-screen min-w-[1200px] flex-col overflow-hidden bg-black">
      <MenuBar />
      <div className="flex min-h-0 flex-1">
        <main className="flex min-w-0 flex-1 flex-col">
          <div className="flex h-[19px] shrink-0 items-center border-b border-[#c8140a] font-['Noto_Sans_CJK_SC',sans-serif] text-[12px] leading-4 text-[#e0e0e0]">
            <h2 className="flex-1 pl-0.5">螺纹2205(010605)&lt;日线&gt;</h2>
            <a href="#overlay" className="mr-5 text-[#78b4ff] underline">商品叠加</a>
            <a href="#period" className="mr-5 text-[#78b4ff] underline">周期</a>
            <div className="mr-0.5 flex gap-px text-[#78b4ff]">
              <button type="button" aria-label="后退" className="h-3.5 w-4 border border-[#78b4ff]">
                <svg viewBox="0 0 14 12" className="h-3 w-3.5" fill="none" stroke="currentColor">
                  <path d="M2 6l4-4v2.500h6v3H6V10z" />
                </svg>
              </button>
              <button type="button" aria-label="前进" className="h-3.5 w-4 border border-[#78b4ff]">
                <svg viewBox="0 0 14 12" className="h-3 w-3.5" fill="none" stroke="currentColor">
                  <path d="M12 6L8 2v2.500H2v3h6V10z" />
                </svg>
              </button>
              <button type="button" aria-label="布局" className="h-3.5 w-4 border border-[#78b4ff]">
                <svg viewBox="0 0 14 12" className="h-3 w-3.5" fill="none" stroke="currentColor" shapeRendering="crispEdges">
                  <path d="M9.500 0v12M0 7.500h9M11 2.500h2M11 5.500h2M11 8.500h2" />
                </svg>
              </button>
            </div>
          </div>
          <section className="flex min-h-0 flex-[574] basis-0 border-b border-[#c8140a]">
            <Axis box="0 46 61 573" labels={[["6000", 111], ["5500", 206], ["5000", 301], ["4500", 396], ["4000", 493], ["3500", 588]]} />
            <div className="flex min-w-0 flex-1 flex-col">
              <Legend tags={K_TAGS} />
              <PricePlot />
            </div>
          </section>
          <section className="flex min-h-0 flex-[153] basis-0 border-b border-[#c8140a]">
            <Axis box="0 620 61 152" labels={[["300万", 662], ["150万", 716]]} />
            <div className="flex min-w-0 flex-1 flex-col">
              <Legend tags={VOL_TAGS} />
              <VolumePlot />
            </div>
          </section>
          <section className="flex min-h-0 flex-[230] basis-0 border-b border-[#c8140a]">
            <Axis framed box="0 773 61 229" labels={[["200", 802], ["0", 880], ["-200", 958]]} />
            <div className="flex min-w-0 flex-1 flex-col">
              <Legend tags={MACD_TAGS} />
              <MacdPlot />
            </div>
          </section>
          <div className="flex h-[15px] shrink-0 font-['Noto_Sans_CJK_SC',sans-serif] text-[11px] leading-[13px] text-[#e0e0e0]">
            <span className="w-[62px] shrink-0 border-r border-[#c8140a] pr-1 text-right text-[12px]">日线</span>
            {MONTHS.map(([m, w]) => (
              <span key={m} className="min-w-0 basis-0" style={{ flexGrow: w }}>
                {m}
              </span>
            ))}
          </div>
        </main>
        <QuotePanel />
        <div className="w-0.5 shrink-0 bg-[#c8c4c4]" />
        <div className="w-0.5 shrink-0 bg-black" />
        <div className="flex w-[5px] shrink-0 flex-col overflow-hidden bg-[#e6eefa]">
          <div className="h-10 bg-[#a8c4f0]" />
          <div className="h-32 bg-[#d2e0f4]" />
          <div className="h-6 bg-white" />
          <div className="flex flex-1 flex-col divide-y divide-[#a0b8dc]">
            {Array.from({ length: 34 }, (_, i) => (
              <div key={i} className="flex-1" />
            ))}
          </div>
        </div>
      </div>
      <footer className="h-[7px] shrink-0 bg-[#c4c4c4]" />
      <InputToolbar />
    </div>
  );
}
